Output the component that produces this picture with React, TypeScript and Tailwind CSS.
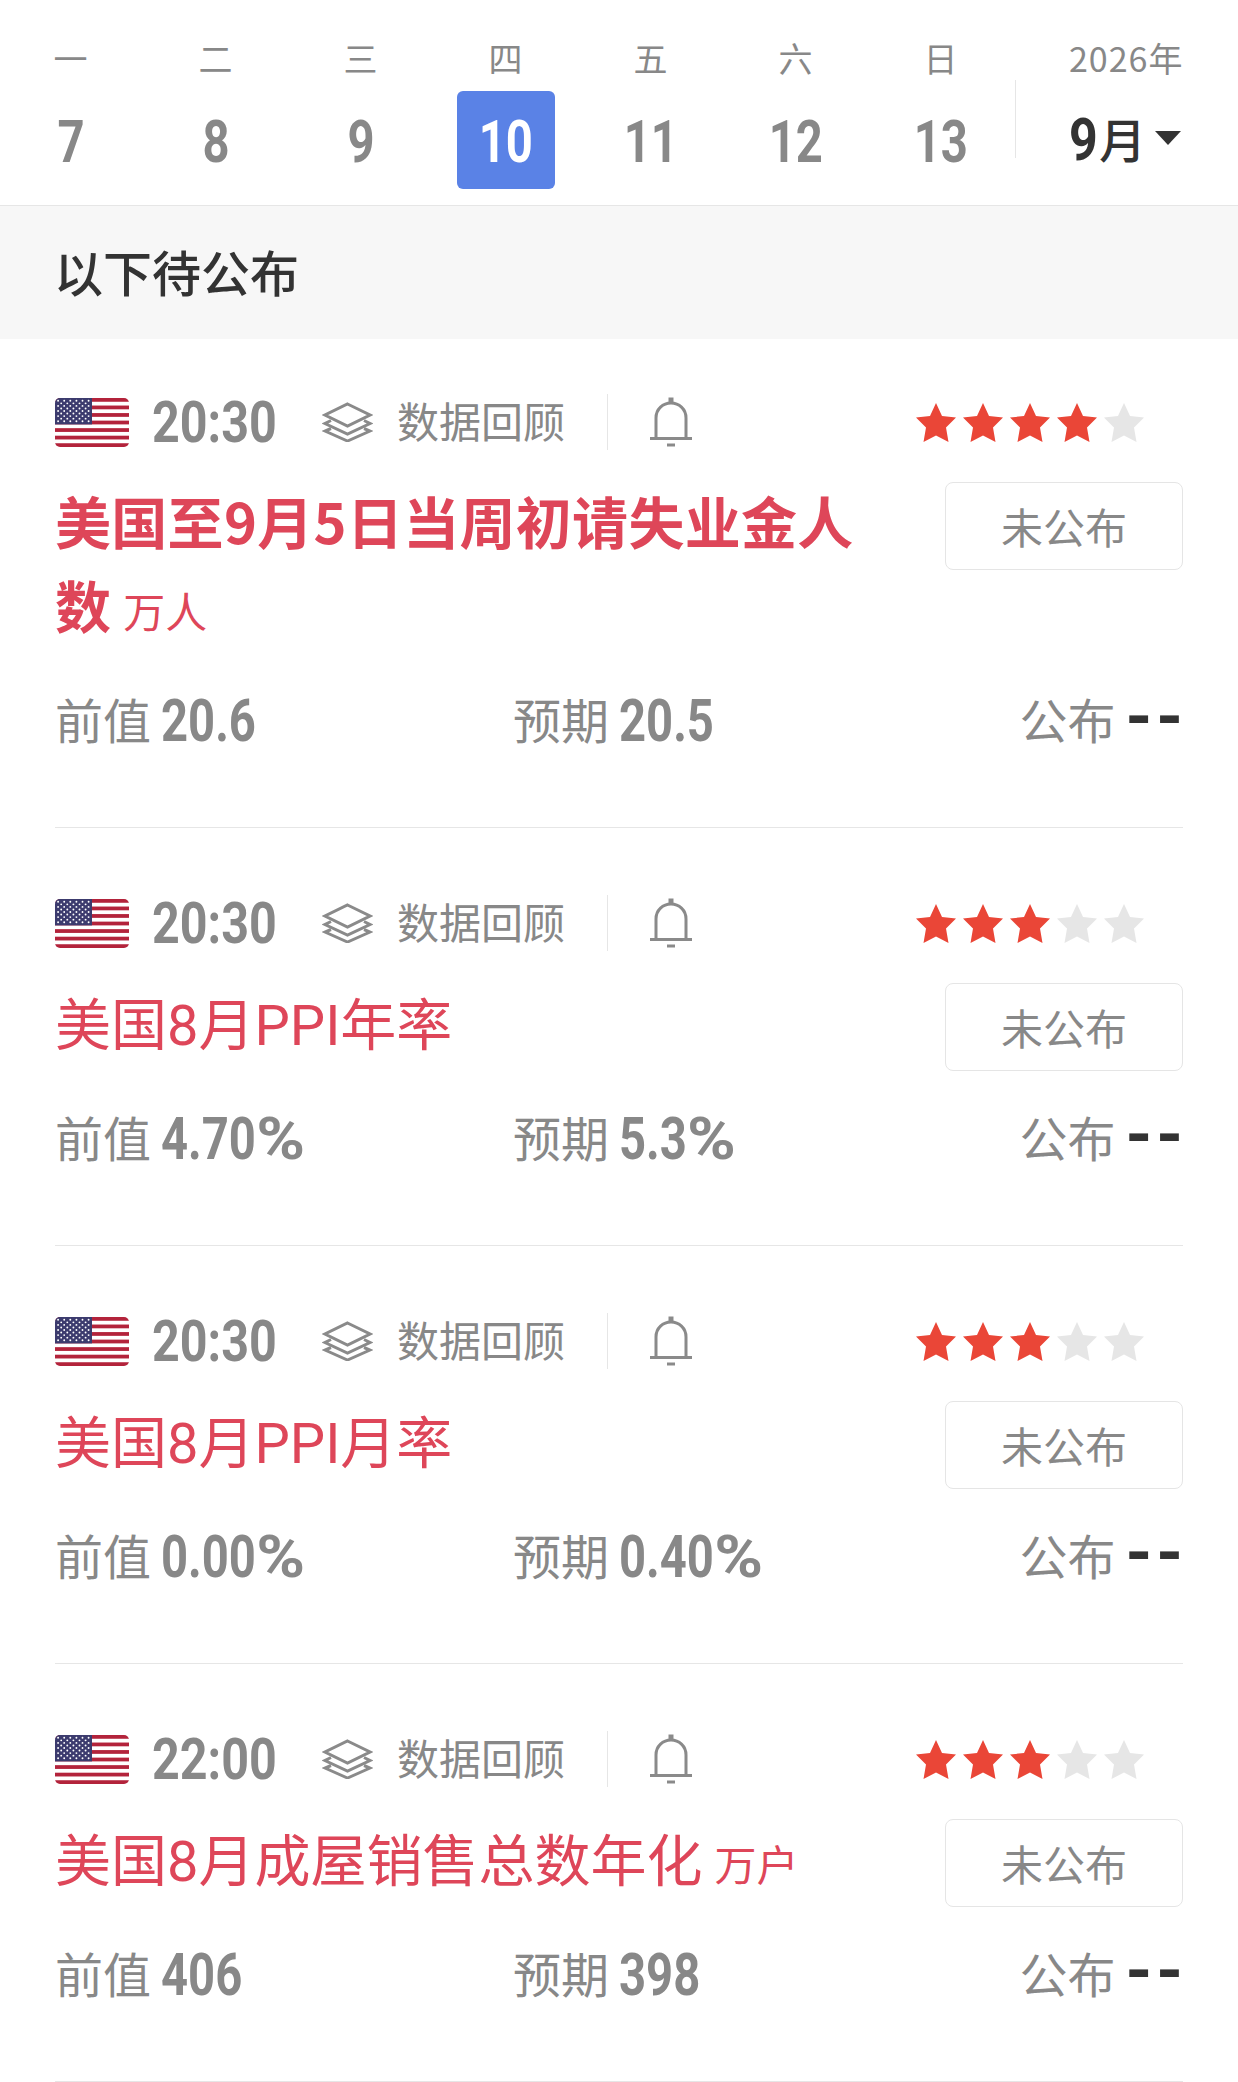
type Item = {
  time: string;
  stars: number;
  title: string;
  unit?: string;
  bold?: boolean;
  prev: string;
  expect: string;
};

const items: Item[] = [
  { time: "20:30", stars: 4, title: "美国至9月5日当周初请失业金人数", unit: "万人", bold: true, prev: "20.6", expect: "20.5" },
  { time: "20:30", stars: 3, title: "美国8月PPI年率", prev: "4.70%", expect: "5.3%" },
  { time: "20:30", stars: 3, title: "美国8月PPI月率", prev: "0.00%", expect: "0.40%" },
  { time: "22:00", stars: 3, title: "美国8月成屋销售总数年化", unit: "万户", prev: "406", expect: "398" },
];

const days = [
  { w: "一", d: "7" },
  { w: "二", d: "8" },
  { w: "三", d: "9" },
  { w: "四", d: "10", active: true },
  { w: "五", d: "11" },
  { w: "六", d: "12" },
  { w: "日", d: "13" },
];

function Flag() {
  const dots = [];
  for (let r = 0; r < 9; r++) {
    const odd = r % 2 === 1;
    for (let c = 0; c < (odd ? 5 : 6); c++) {
      dots.push(<circle key={r + "-" + c} cx={(odd ? 6.2 : 3.1) + c * 6.1} cy={2.8 + r * 2.55} r="0.95" fill="#fff" />);
    }
  }
  return (
    <svg width="74" height="49" viewBox="0 0 74 49" className="shrink-0">
      <defs>
        <clipPath id="flag-clip">
          <rect width="74" height="49" rx="5" />
        </clipPath>
      </defs>
      <g clipPath="url(#flag-clip)">
        <rect width="74" height="49" fill="#fff" />
        {[0, 1, 2, 3, 4, 5, 6].map((i) => (
          <rect key={i} y={i * 7.54} width="74" height="3.77" fill="#b3233b" />
        ))}
        <rect width="37" height="26.4" fill="#3c3b6e" />
        {dots}
      </g>
    </svg>
  );
}

function Layers() {
  return (
    <svg width="51" height="40" viewBox="0 0 51 40" fill="none" stroke="#8a8a8a" strokeWidth="3" className="shrink-0">
      <path d="M25.5 2 L48 13 L25.5 24 L3 13 Z" />
      <path d="M9 18.5 L3 21.5 L25.5 32 L48 21.5 L42 18.5" />
      <path d="M9 26.5 L3 29 L25.5 39 L48 29 L42 26.5" />
    </svg>
  );
}

function Bell() {
  return (
    <svg width="42" height="50" viewBox="0 0 42 50" fill="none" stroke="#8a8a8a" className="shrink-0">
      <path d="M6 41 V21 C6 12 13 6 21 6 C29 6 36 12 36 21 V41" strokeWidth="3" />
      <path d="M0 41.5 H42" strokeWidth="3" />
      <path d="M21 0.5 V6" strokeWidth="5" />
      <path d="M17 48 H25" strokeWidth="3" />
    </svg>
  );
}

function Star({ on }: { on: boolean }) {
  return (
    <svg width="40" height="39" viewBox="0 0 40 39" className="shrink-0">
      <path
        d="M20 0 L26 13 L40 14.5 L30 24.5 L32.5 39 L20 32.5 L7.5 39 L10 24.5 L0 14.5 L14 13 Z"
        fill={on ? "#ea4637" : "#e6e6e6"}
      />
    </svg>
  );
}

function Stat({ label, value, className }: { label: string; value: string; className?: string }) {
  const percent = value.endsWith("%");
  return (
    <div className={"flex items-center " + (className ?? "")}>
      <span className="mb-[6px] text-[48px] leading-[60px] text-[#888888]">{label}</span>
      <span className="ml-[10px] inline-block origin-left scale-x-[0.8] font-['Roboto',sans-serif] text-[59px] leading-[60px] font-bold text-[#888888]">
        {percent ? value.slice(0, -1) : value}
        {percent && <span className="inline-block origin-left scale-x-[1.4]">%</span>}
      </span>
    </div>
  );
}

function Row({ item }: { item: Item }) {
  return (
    <div className="border-b border-[#e6e6e6] pb-[76px]">
      <div className="flex h-[56px] items-center">
        <Flag />
        <span className="mt-[2px] ml-[23px] inline-block w-[121px] origin-left scale-x-[0.85] font-['Roboto',sans-serif] text-[57px] leading-[56px] font-bold text-[#888888]">
          {item.time}
        </span>
        <span className="ml-[49px]">
          <Layers />
        </span>
        <span className="mb-[4px] ml-[24px] w-[169px] text-[42px] leading-[56px] text-[#888888]">数据回顾</span>
        <span className="ml-[41px] h-[56px] w-px bg-[#e6e6e6]" />
        <span className="ml-[42px]">
          <Bell />
        </span>
        <div className="mr-[39px] ml-auto flex gap-[7px]">
          {[1, 2, 3, 4, 5].map((n) => (
            <Star key={n} on={n <= item.stars} />
          ))}
        </div>
      </div>
      <div className="mt-[32px] flex items-start justify-between">
        <div
          className={
            "w-[820px] text-[56px] leading-[84px] text-[#de4659] " +
            (item.bold
              ? "-mt-[4px] pb-[7px] font-bold tracking-[0.3px]"
              : "mt-[1px] pb-[2px] font-['Roboto','Noto_Sans_CJK_SC',sans-serif]")
          }
        >
          {item.title}
          {item.unit && (
            <span className="ml-[12px] font-['Noto_Sans_CJK_SC',sans-serif] text-[42px] leading-none font-normal tracking-normal">
              {item.unit}
            </span>
          )}
        </div>
        <div className="flex h-[88px] w-[238px] items-center justify-center rounded-[8px] border border-[#e5e5e5] pb-[2px] text-[42px] text-[#888888]">
          未公布
        </div>
      </div>
      <div className="mt-[38px] flex h-[60px] items-center">
        <Stat label="前值" value={item.prev} className="w-[458px]" />
        <Stat label="预期" value={item.expect} />
        <div className="ml-auto flex items-center">
          <span className="mb-[6px] text-[48px] leading-[60px] text-[#888888]">公布</span>
          <span className="mb-[8px] ml-[10px] -mr-[4px] font-['Roboto',sans-serif] text-[68px] leading-[60px] font-bold tracking-[4px] text-[#333333]">
            --
          </span>
        </div>
      </div>
    </div>
  );
}

export default function App() {
  return (
    <div className="h-[2082px] w-[1238px] overflow-hidden bg-white font-['Noto_Sans_CJK_SC',sans-serif]">
      <div className="flex h-[206px] items-start border-b border-[#e6e6e6]">
        <div className="-ml-[2px] flex">
          {days.map((x) => (
            <div key={x.d} className="flex w-[145px] flex-col items-center">
              <span className="mt-[38px] h-[40px] text-[34px] leading-[40px] text-[#888888]">{x.w}</span>
              <span
                className={
                  "mt-[13px] flex h-[98px] w-[98px] items-center justify-center rounded-[6px] pt-[4px] " +
                  (x.active ? "bg-[#5a82e6] text-white" : "text-[#888888]")
                }
              >
                <span className="inline-block scale-x-[0.8] font-['Roboto',sans-serif] text-[59px] font-bold">{x.d}</span>
              </span>
            </div>
          ))}
        </div>
        <div className="mt-[80px] ml-[2px] h-[78px] w-px bg-[#e6e6e6]" />
        <div className="ml-[53px] flex flex-col">
          <span className="mt-[38px] h-[40px] text-[34px] leading-[40px] tracking-[1px] text-[#888888]">2026年</span>
          <div className="mt-[13px] flex h-[98px] items-center text-[#333333]">
            <span className="inline-block w-[30px] origin-left scale-x-[0.85] font-['Roboto',sans-serif] text-[59px] font-bold">9</span>
            <span className="mb-[3px] text-[47px] font-medium">月</span>
            <span className="mt-[-4px] ml-[9px] h-0 w-0 border-x-[13px] border-t-[14px] border-x-transparent border-t-[#333333]" />
          </div>
        </div>
      </div>
      <div className="flex h-[133px] items-center bg-[#f7f7f7] pb-[3px] pl-[54px] text-[49px] font-medium text-[#333333]">
        以下待公布
      </div>
      <div className="px-[55px] pt-[55px]">
        {items.map((it, i) => (
          <div key={i} className={i > 0 ? "pt-[67px]" : ""}>
            <Row item={it} />
          </div>
        ))}
      </div>
    </div>
  );
}
